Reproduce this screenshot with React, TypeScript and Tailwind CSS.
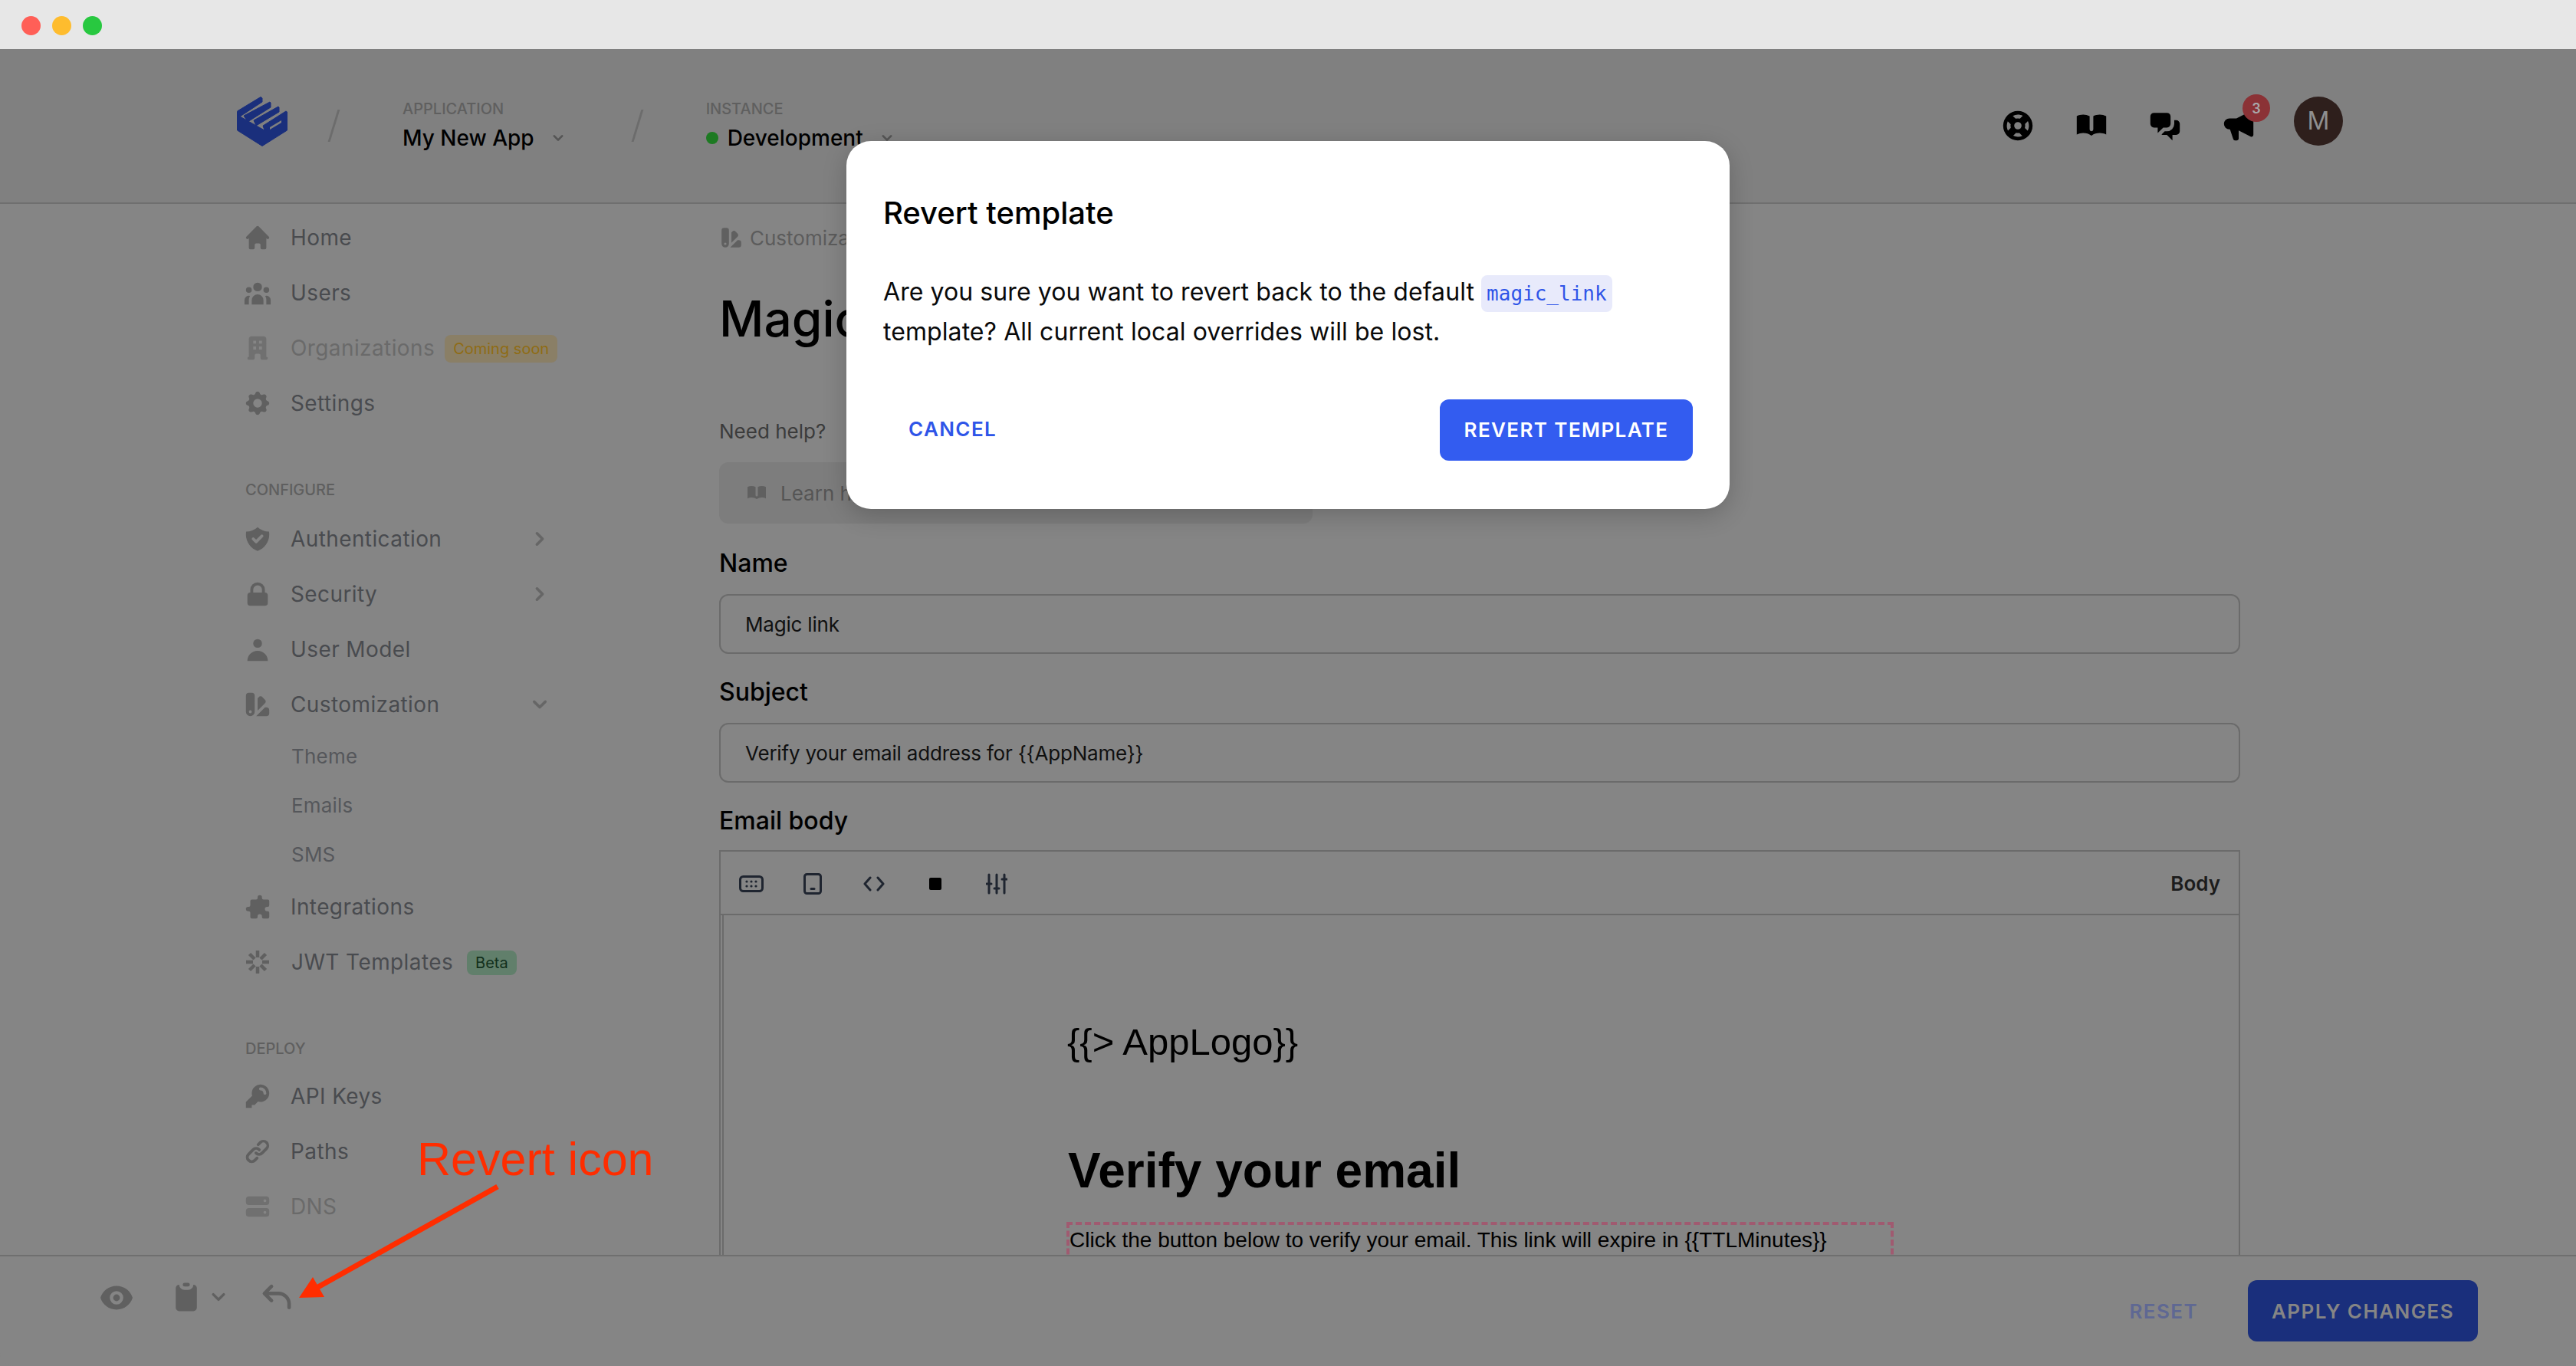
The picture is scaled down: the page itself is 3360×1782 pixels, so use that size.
import { FC, ReactNode } from "react";
import { IconType } from "react-icons";
import {
  HiHome, HiUserGroup, HiOfficeBuilding, HiCog, HiShieldCheck, HiLockClosed, HiUser, HiColorSwatch,
  HiPuzzle, HiKey, HiLink, HiServer, HiChevronRight, HiChevronDown, HiSupport, HiBookOpen, HiChatAlt2,
  HiSpeakerphone, HiEye, HiClipboard, HiReply,
} from "react-icons/hi";

const inter = "font-['Inter',sans-serif]";

const Logo = () => (
  <svg width="66" height="65" viewBox="0 0 66 65" fill="#1a2f7c" stroke="#1a2f7c" strokeWidth="1" strokeLinejoin="round" className="shrink-0">
    <path d="M0.500 20 L4 26 L36 44 L65.500 27 L65.500 44 L33 64.500 L0.500 44 Z" />
    <path d="M0.500 19 L31 0.500 L33 2 L33 7 L4 26 Z" />
    <path d="M9 25 L43 7 L44 8 L44 14 L14 33 Z" />
    <path d="M22 31 L54 13 L55 14 L55 20 L25 38 Z" />
    <path d="M34 38 L64 19 L65.500 20 L65.500 30 L36 44 Z" />
    <path d="M43 40 L58 31 L58 34 L43 43 Z" fill="#808080" stroke="none" />
  </svg>
);

const SideItem: FC<{ icon: IconType; label: string; faded?: boolean; arrow?: "right" | "down"; children?: ReactNode }> = ({ icon: Icon, label, faded, arrow, children }) => (
  <div className="flex items-center h-[72px] w-[400px]">
    <Icon className={`w-[38px] h-[38px] -ml-[3px] shrink-0 ${faded ? "text-[#707070]" : "text-[#606060]"}`} />
    <span className={`ml-[24px] text-[28px] tracking-[0.4px] ${faded ? "text-[#6a6a6a]" : "text-[#494b4f]"}`}>{label}</span>
    {children}
    {arrow === "right" && <HiChevronRight className="ml-auto -mr-[2px] w-[36px] h-[36px] text-[#666]" />}
    {arrow === "down" && <HiChevronDown className="ml-auto -mr-[2px] w-[36px] h-[36px] text-[#666]" />}
  </div>
);

const SubItem: FC<{ label: string }> = ({ label }) => (
  <div className="h-[64px] pl-[60px] flex items-center text-[26px] tracking-[0.2px] text-[#55575b] -mt-[1px] mb-[1px]">{label}</div>
);

const SectionTitle: FC<{ label: string; className?: string }> = ({ label, className }) => (
  <div className={`text-[20px] leading-[24px] font-medium text-[#5f5f5f] ${className}`}>{label}</div>
);

const JwtIcon = () => (
  <svg width="32" height="32" viewBox="0 0 32 32" className="shrink-0" stroke="#606060" strokeWidth="4.500">
    <path d="M16 1v9M16 22v9M1 16h9M22 16h9M5.500 5.500l6.500 6.500M20 20l6.500 6.500M26.500 5.500 20 12M12 20l-6.500 6.500" />
  </svg>
);

const Slash = () => <div className="mt-[17px] w-[3px] h-[42px] bg-[#6c6c6c] skew-x-[-17deg] shrink-0" />;

const Field: FC<{ label: string; value: string }> = ({ label, value }) => (
  <>
    <div className="text-[32px] leading-[40px] font-medium text-black mb-[20px]">{label}</div>
    <div className="h-[78px] mb-[30px] border-2 border-[#6b6b6b] rounded-[12px] flex items-center pl-[32px] text-[26px] tracking-[-0.2px] text-[#101010]">{value}</div>
  </>
);

const ToolbarIcon: FC<{ children: ReactNode }> = ({ children }) => (
  <div className="w-[80px] flex items-center justify-center">{children}</div>
);

export default function App() {
  return (
    <div className={`relative w-[3360px] h-[1782px] overflow-hidden bg-white flex flex-col ${inter}`}>
      {/* title bar */}
      <div className="h-[64px] shrink-0 bg-[#e7e7e7] flex items-center gap-[15px] pl-[28px] pt-[3px]">
        <div className="w-[25px] h-[25px] rounded-full bg-[#ff5f57]" />
        <div className="w-[25px] h-[25px] rounded-full bg-[#febc2e]" />
        <div className="w-[25px] h-[25px] rounded-full bg-[#28c840]" />
      </div>

      {/* header */}
      <div className="h-[202px] shrink-0 bg-[#808080] border-b-2 border-[#6f6f6f] flex items-start pl-[309px] pr-[304px] pt-[62px]">
        <Logo />
        <div className="ml-[59px]"><Slash /></div>
        <div className="ml-[88px] mt-[4px]">
          <SectionTitle label="APPLICATION" />
          <div className="mt-[8px] flex items-center text-[28px] leading-[36px] font-medium text-black">
            My New App
            <HiChevronDown className="ml-[18px] w-[26px] h-[26px] text-[#555]" />
          </div>
        </div>
        <div className="ml-[89px]"><Slash /></div>
        <div className="ml-[88px] mt-[4px]">
          <SectionTitle label="INSTANCE" />
          <div className="mt-[8px] flex items-center text-[28px] leading-[36px] font-medium text-black">
            <span className="w-[16px] h-[16px] rounded-full bg-[#1d7a22] mr-[12px]" />
            Development
            <HiChevronDown className="ml-[18px] w-[26px] h-[26px] text-[#555]" />
          </div>
        </div>
        <div className="ml-auto flex items-start">
          <HiSupport className="w-[48px] h-[48px] mt-[14px] text-black" />
          <HiBookOpen className="ml-[48px] w-[48px] h-[48px] mt-[14px] text-black" />
          <HiChatAlt2 className="ml-[48px] w-[48px] h-[48px] mt-[14px] text-black" />
          <div className="relative ml-[48px] mt-[14px]">
            <HiSpeakerphone className="w-[48px] h-[48px] text-black" />
            <span className="absolute -top-[17px] left-[29px] w-[36px] h-[36px] rounded-full bg-[#8b3236] text-[#a9a9a9] text-[18px] font-semibold flex items-center justify-center">3</span>
          </div>
          <div className="ml-[48px] w-[64px] h-[64px] rounded-full bg-[#2e1f1c] text-[#8f8f8f] text-[32px] flex items-center justify-center">M</div>
        </div>
      </div>

      {/* body */}
      <div className="flex-1 min-h-0 bg-[#858585] flex overflow-hidden">
        <div className="w-[938px] shrink-0 pl-[320px] pt-[8px]">
          <SideItem icon={HiHome} label="Home" />
          <SideItem icon={HiUserGroup} label="Users" />
          <SideItem icon={HiOfficeBuilding} label="Organizations" faded>
            <span className="ml-[13px] mt-[2px] h-[36px] px-[11px] rounded-[8px] bg-[#8a7f66] text-[#8f6c14] text-[20px] flex items-center whitespace-nowrap">Coming soon</span>
          </SideItem>
          <SideItem icon={HiCog} label="Settings" />
          <SectionTitle label="CONFIGURE" className="mt-[65px] mb-[16px]" />
          <SideItem icon={HiShieldCheck} label="Authentication" arrow="right" />
          <SideItem icon={HiLockClosed} label="Security" arrow="right" />
          <SideItem icon={HiUser} label="User Model" />
          <SideItem icon={HiColorSwatch} label="Customization" arrow="down" />
          <SubItem label="Theme" />
          <SubItem label="Emails" />
          <SubItem label="SMS" />
          <SideItem icon={HiPuzzle} label="Integrations" />
          <div className="flex items-center h-[72px] w-[400px]">
            <JwtIcon />
            <span className="ml-[28px] text-[28px] tracking-[0.4px] text-[#494b4f]">JWT Templates</span>
            <span className="ml-[18px] mt-[2px] h-[32px] px-[11px] rounded-[8px] bg-[#617f6b] text-[#11301c] text-[20px] flex items-center">Beta</span>
          </div>
          <SectionTitle label="DEPLOY" className="mt-[65px] mb-[14px]" />
          <SideItem icon={HiKey} label="API Keys" />
          <SideItem icon={HiLink} label="Paths" />
          <SideItem icon={HiServer} label="DNS" faded />
        </div>

        <div className="flex-1 min-w-0 pr-[438px] pt-[26px]">
          <div className="h-[36px] flex items-center text-[26px] text-[#5c5c5c]">
            <HiColorSwatch className="w-[32px] h-[32px] text-[#606060] mr-[8px]" />
            Customization
          </div>
          <div className="mt-[46px] h-[84px] text-[64px] leading-[84px] font-medium text-black">Magic link</div>
          <div className="mt-[87px] h-[36px] text-[26px] leading-[36px] text-[#3b3b3b]">Need help?</div>
          <div className="mt-[22px] w-[774px] h-[80px] rounded-[12px] bg-[#7d7d7d] flex items-center pl-[34px] text-[26px] text-[#555]">
            <HiBookOpen className="w-[30px] h-[30px] text-[#606060] mr-[16px]" />
            Learn how to customize emails
          </div>
          <div className="mt-[32px]">
            <Field label="Name" value="Magic link" />
            <Field label="Subject" value="Verify your email address for {{AppName}}" />
            <div className="text-[32px] leading-[40px] font-medium text-black mb-[18px]">Email body</div>
            <div className="border-2 border-[#6b6b6b] h-[600px]">
              <div className="h-[83px] pt-[2px] border-b-2 border-[#6b6b6b] flex items-center text-[#1f2530]">
                <ToolbarIcon>
                  <svg width="32" height="22" viewBox="0 0 32 22" fill="none">
                    <rect x="1.500" y="1.500" width="29" height="19" rx="4" stroke="#1f2530" strokeWidth="3" />
                    <g fill="#1f2530"><circle cx="10" cy="8" r="1.600" /><circle cx="16" cy="8" r="1.600" /><circle cx="22" cy="8" r="1.600" /><circle cx="10" cy="14" r="1.600" /><circle cx="16" cy="14" r="1.600" /><circle cx="22" cy="14" r="1.600" /></g>
                  </svg>
                </ToolbarIcon>
                <ToolbarIcon>
                  <svg width="24" height="28" viewBox="0 0 24 28" fill="none" stroke="#1f2530" strokeWidth="3" strokeLinecap="round">
                    <rect x="1.500" y="1.500" width="21" height="25" rx="3" />
                    <path d="M10 20.500h4" />
                  </svg>
                </ToolbarIcon>
                <ToolbarIcon>
                  <svg width="28" height="20" viewBox="0 0 28 20" fill="none" stroke="#1f2530" strokeWidth="3" strokeLinecap="round" strokeLinejoin="round">
                    <path d="M9 2 2 10l7 8M19 2l7 8-7 8" />
                  </svg>
                </ToolbarIcon>
                <ToolbarIcon>
                  <span className="w-[16px] h-[16px] rounded-[2px] bg-black" />
                </ToolbarIcon>
                <ToolbarIcon>
                  <svg width="28" height="28" viewBox="0 0 28 28" fill="none" stroke="#1f2530" strokeWidth="3" strokeLinecap="round">
                    <path d="M4 2v24M14 2v24M24 2v24M1 14h6M11 20h6M21 8h6" />
                  </svg>
                </ToolbarIcon>
                <span className="ml-auto mr-[24px] text-[26px] font-semibold text-[#1c1c1c]">Body</span>
              </div>
              <div className="ml-[2px] border-l-2 border-[#6b6b6b] h-full pl-[449px] pt-[137px] font-['Liberation_Sans',sans-serif] text-black">
                <div className="text-[49px] leading-[56px] -ml-[1px]">{"{{> AppLogo}}"}</div>
                <div className="mt-[102px] text-[64px] leading-[76px] font-bold">Verify your email</div>
                <div className="mt-[29px] -ml-[2px] w-[1079px] h-[100px] border-[4px] border-dashed border-[#a05a70] pt-[2px] text-[28px] leading-[36px] whitespace-nowrap">
                  {"Click the button below to verify your email. This link will expire in {{TTLMinutes}}"}
                </div>
              </div>
            </div>
          </div>
        </div>
      </div>

      {/* footer */}
      <div className="absolute left-0 right-0 bottom-0 h-[145px] bg-[#858585] border-t-2 border-[#6f6f6f] flex items-start pl-[130px] pr-[128px] rounded-b-[18px]">
        <HiEye className="mt-[32px] w-[44px] h-[44px] text-[#606060]" />
        <HiClipboard className="ml-[46px] mt-[30px] w-[46px] h-[46px] text-[#606060]" />
        <HiChevronDown className="ml-[2px] mt-[36px] w-[34px] h-[34px] text-[#606060]" />
        <HiReply className="ml-[36px] mt-[30px] w-[46px] h-[46px] text-[#606060]" />
        <div className="ml-auto mt-[31px] flex items-center gap-[65px] text-[26px] font-semibold tracking-[1.4px]">
          <span className="text-[#5f6893]">RESET</span>
          <span className="w-[300px] h-[80px] rounded-[12px] bg-[#1a2f7c] text-[#858585] flex items-center justify-center">APPLY CHANGES</span>
        </div>
      </div>

      {/* annotation */}
      <div className="absolute left-[544px] top-[1476px] text-[61px] leading-[72px] text-[#ff2d00] font-['Liberation_Sans',sans-serif]">Revert icon</div>
      <svg className="absolute left-0 top-0 pointer-events-none" width="3360" height="1782" fill="#ff2d00">
        <path d="M649 1548 L413 1680" stroke="#ff2d00" strokeWidth="7" fill="none" />
        <path d="M390 1693 L408 1666 L423 1692 Z" />
      </svg>

      {/* dialog */}
      <div className="absolute left-0 right-0 top-[184px] flex justify-center">
        <div className="w-[1152px] h-[480px] rounded-[32px] bg-white px-[48px] pt-[70px] shadow-[0_8px_32px_rgba(0,0,0,0.2)]">
          <div className="text-[40px] leading-[48px] font-medium text-black">Revert template</div>
          <div className="mt-[53px] text-[32px] leading-[52px] tracking-[0.08px] text-[#0a0a0a]">
            Are you sure you want to revert back to the default{" "}
            <code className="inline-block font-['DejaVu_Sans_Mono',monospace] text-[26px] leading-[48px] px-[7px] rounded-[8px] bg-[#e8eafb] text-[#2f55e8] tracking-normal">magic_link</code>
            <br />
            template? All current local overrides will be lost.
          </div>
          <div className="mt-[62px] flex items-center justify-between text-[26px] font-semibold tracking-[1.4px]">
            <span className="ml-[33px] -mt-[3px] text-[#2f55e8]">CANCEL</span>
            <span className="w-[330px] h-[80px] pb-[2px] rounded-[12px] bg-[#335cf0] text-white flex items-center justify-center">REVERT TEMPLATE</span>
          </div>
        </div>
      </div>
    </div>
  );
}
